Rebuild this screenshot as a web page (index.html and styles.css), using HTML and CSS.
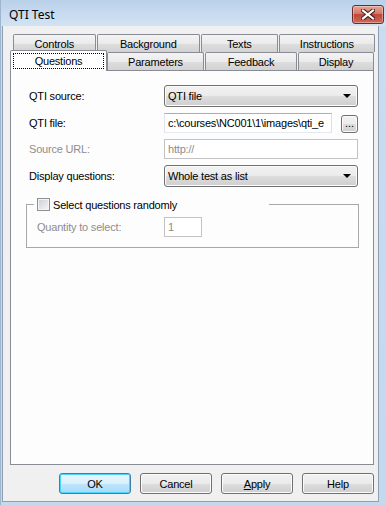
FILE: index.html
```html
<!DOCTYPE html>
<html lang="en">
<head>
  <meta charset="UTF-8">
  <title>QTI Test</title>
  <link rel="stylesheet" href="styles.css">
</head>
<body>
  <div class="window">
    <div class="titlebar">
      <span class="title">QTI Test</span>
      <button class="close" type="button">
        <svg width="14" height="11" viewBox="0 0 14 11">
          <path d="M2 1.5 L12 9.5 M12 1.5 L2 9.5" stroke="#3b2020" stroke-width="4.2" stroke-linecap="square"/>
          <path d="M2 1.5 L12 9.5 M12 1.5 L2 9.5" stroke="#ffffff" stroke-width="2.2" stroke-linecap="square"/>
        </svg>
      </button>
    </div>
    <div class="client">
      <div class="tabs">
        <div class="tab-row top-row">
          <div class="tab w-controls">Controls</div>
          <div class="tab w-background">Background</div>
          <div class="tab w-texts">Texts</div>
          <div class="tab w-instructions">Instructions</div>
        </div>
        <div class="tab-row bottom-row">
          <div class="tab selected w-questions"><span class="focus">Questions</span></div>
          <div class="tab w-parameters">Parameters</div>
          <div class="tab w-feedback">Feedback</div>
          <div class="tab w-display">Display</div>
        </div>
      </div>
      <div class="panel">
        <div class="form">
          <label class="lbl">QTI source:</label>
          <div class="combo"><span>QTI file</span><i class="arrow"></i></div>

          <label class="lbl">QTI file:</label>
          <div class="file-row">
            <div class="textbox"><span class="clip">c:\courses\NC001\1\images\qti_e</span></div>
            <button class="btn small" type="button">...</button>
          </div>

          <label class="lbl disabled">Source URL:</label>
          <div class="textbox off">http://</div>

          <label class="lbl">Display questions:</label>
          <div class="combo"><span>Whole test as list</span><i class="arrow"></i></div>
        </div>

        <fieldset class="group">
          <legend class="legend"><span class="check"></span>Select questions randomly</legend>
          <div class="qty">
            <label class="lbl disabled">Quantity to select:</label>
            <div class="textbox off num">1</div>
          </div>
        </fieldset>
      </div>
      <div class="buttons">
        <button class="btn default" type="button">OK</button>
        <button class="btn" type="button">Cancel</button>
        <button class="btn" type="button"><u>A</u>pply</button>
        <button class="btn" type="button">Help</button>
      </div>
    </div>
  </div>
</body>
</html>
```

FILE: styles.css
```css
html, body {
  margin: 0;
  padding: 0;
}
body {
  font-family: 'Liberation Sans', Arial, sans-serif;
  font-size: 11px;
  letter-spacing: -0.2px;
  color: #000;
  background: #c4d8ee;
}
.window {
  width: 386px;
  height: 505px;
  box-sizing: border-box;
  display: flex;
  flex-direction: column;
  background: linear-gradient(#bad1ea, #d3e3f4 26px, #c9dcf0 27px, #c4d8ee);
  border-left: 1px solid #9fb6cf;
  padding: 0 7px 3px 1px;
}
.titlebar {
  height: 26px;
  display: flex;
  align-items: center;
  justify-content: space-between;
  flex-shrink: 0;
}
.title {
  font-family: 'Noto Sans', 'Liberation Sans', sans-serif;
  font-size: 12px;
  letter-spacing: 0;
  padding-left: 7px;
  padding-top: 2px;
}
.close {
  width: 32px;
  height: 19px;
  margin: 2px -5px 0 0;
  padding: 0;
  border: 1px solid #6b2b2b;
  border-radius: 3px;
  background: linear-gradient(#e8a493, #d3776a 45%, #c0473a 50%, #cf6a5a);
  box-shadow: inset 0 0 0 1px rgba(255, 255, 255, 0.35);
  display: flex;
  align-items: center;
  justify-content: center;
}
.client {
  flex: 1;
  background: #f0f0f0;
  border: 1px solid #8e9fb4;
  border-top: none;
  padding: 8px 3px 0 7px;
  display: flex;
  flex-direction: column;
}
.tab-row {
  display: flex;
  height: 18px;
}
.top-row {
  padding-left: 3px;
  gap: 1px;
}
.bottom-row {
  padding-left: 2px;
  gap: 1px;
}
.tab {
  box-sizing: border-box;
  height: 18px;
  border: 1px solid #898c95;
  border-bottom: none;
  border-radius: 2px 2px 0 0;
  background: linear-gradient(#f3f3f3, #ebebeb 50%, #dedede 51%, #d2d2d2);
  display: flex;
  align-items: center;
  justify-content: center;
  padding-top: 1px;
}
.w-controls { width: 83px; }
.w-background { width: 104px; }
.w-texts { width: 77px; }
.w-instructions { width: 97px; }
.w-questions { width: 97px; }
.w-parameters { width: 97px; }
.w-feedback { width: 92px; }
.w-display { width: 76px; }
.tab.selected {
  position: relative;
  z-index: 1;
  height: 21px;
  margin: -2px -1px -1px -2px;
  background: #ffffff;
  padding: 0 2px 1px;
}
.focus {
  flex: 1;
  text-align: center;
  border: 1px dotted #000;
  line-height: 14px;
}
.panel {
  height: 395px;
  box-sizing: border-box;
  border: 1px solid #898c95;
  background: #fdfdfd;
  margin-right: 1px;
  padding: 14px 14px 0 15px;
}
.form {
  display: grid;
  grid-template-columns: 135px 194px;
  grid-template-rows: 22px 20px 20px 22px;
  row-gap: 6px;
  padding-left: 3px;
  align-items: center;
}
.lbl {
  display: block;
}
.disabled {
  color: #8d8d8d;
}
.combo {
  box-sizing: border-box;
  height: 22px;
  border: 1px solid #707070;
  border-radius: 3px;
  background: linear-gradient(#f2f2f2, #ebebeb 50%, #dddddd 51%, #cfcfcf);
  display: flex;
  align-items: center;
  justify-content: space-between;
  padding: 0 6px 0 3px;
  box-shadow: inset 0 0 0 1px #fbfbfb;
}
.arrow {
  width: 0;
  height: 0;
  border-left: 4px solid transparent;
  border-right: 4px solid transparent;
  border-top: 4px solid #000;
}
.file-row {
  display: flex;
  align-items: center;
  gap: 9px;
}
.textbox {
  box-sizing: border-box;
  height: 20px;
  border: 1px solid #abadb3;
  border-color: #abadb3 #dbdfe6 #e3e9ef #e2e3ea;
  background: #fff;
  padding: 0 3px;
  display: flex;
  align-items: center;
  overflow: hidden;
  white-space: nowrap;
}
.file-row .textbox {
  width: 168px;
  flex-shrink: 0;
}
.textbox.off {
  border-color: #c3c3c3;
  color: #8d8d8d;
}
.clip {
  overflow: hidden;
}
.btn {
  font-family: 'Liberation Sans', Arial, sans-serif;
  font-size: 11px;
  letter-spacing: -0.2px;
  color: #000;
  box-sizing: border-box;
  width: 72px;
  height: 21px;
  padding: 0;
  border: 1px solid #707070;
  border-radius: 3px;
  background: linear-gradient(#f2f2f2, #ebebeb 50%, #dddddd 51%, #cfcfcf);
  box-shadow: inset 0 0 0 1px #fbfbfb;
}
.btn.small {
  width: 18px;
  height: 18px;
  line-height: 12px;
  padding-bottom: 2px;
  margin-top: 1px;
  letter-spacing: 0;
}
.btn.default {
  border-color: #3c7fb1;
  background: linear-gradient(#eaf6fd, #d9f0fc 50%, #bee6fd 51%, #a7d9f5);
  box-shadow: inset 0 0 0 1px #48d4ff;
}
.group {
  margin: 11px 0 0 0;
  padding: 0 0 10px 10px;
  border: 1px solid #a8a8a8;
}
.legend {
  width: 235px;
  box-sizing: border-box;
  padding: 0 0 0 3px;
  margin-left: -3px;
  display: flex;
  align-items: center;
  height: 13px;
}
.check {
  width: 13px;
  height: 13px;
  box-sizing: border-box;
  border: 1px solid #8e8f8f;
  background: linear-gradient(135deg, #cbcfd5, #f6f6f6);
  box-shadow: inset 0 0 0 1px #f4f4f4;
  margin-right: 3px;
}
.qty {
  display: grid;
  grid-template-columns: 127px 38px;
  align-items: center;
  padding-top: 6px;
}
.num {
  height: 20px;
}
.buttons {
  display: flex;
  justify-content: flex-end;
  gap: 9px;
  margin-top: 8px;
  padding-right: 1px;
}
```
